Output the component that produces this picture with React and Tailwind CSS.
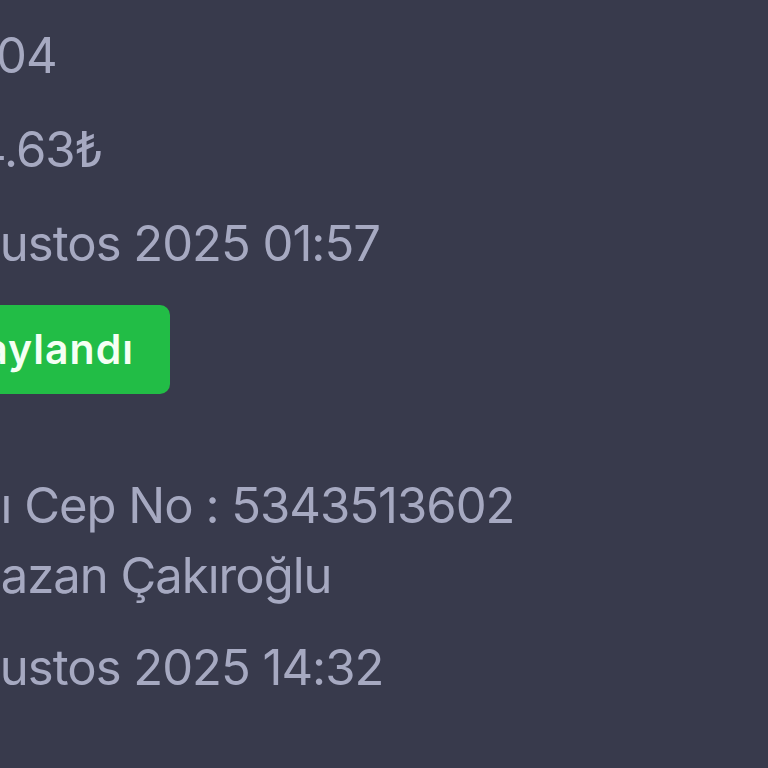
import React from "react";

const rows = [
  { text: "04", shift: "-ml-[4px]" },
  { text: "4.63₺", shift: "-ml-[25px]" },
  { text: "Ağustos 2025 01:57", shift: "-ml-[62px]" },
];

const OrderDetail = () => {
  return (
    <div className="w-[768px] h-[768px] overflow-hidden bg-[#383a4c] font-['Inter',sans-serif] text-[#a6a9c1]">
      <div className="flex flex-col pt-[21px]">
        {/* ORDER INFO */}
        <div className="flex flex-col gap-[24px]">
          {rows.map((r) => (
            <p key={r.text} className={`text-[49px] tracking-[-1px] leading-[70px] whitespace-nowrap ${r.shift}`}>
              {r.text}
            </p>
          ))}
        </div>

        {/* STATUS */}
        <div className="mt-[26px] -ml-[100px] w-[270px] h-[89px] flex items-center justify-end overflow-hidden rounded-[10px] bg-[#22bd46] pr-[36px]">
          <span className="text-[41px] font-semibold tracking-[1px] text-[#f4fff4] whitespace-nowrap">Onaylandı</span>
        </div>

        {/* DELIVERY INFO */}
        <div className="mt-[77px] flex flex-col text-[49px] tracking-[-1px] leading-[70px]">
          <p className="whitespace-nowrap -ml-[81px]">Alıcı Cep No : 5343513602</p>
          <p className="whitespace-nowrap -ml-[98px]">Ramazan Çakıroğlu</p>
          <p className="mt-[22px] whitespace-nowrap -ml-[62px]">Ağustos 2025 14:32</p>
        </div>
      </div>
    </div>
  );
};

export default function App() {
  return <OrderDetail />;
}
